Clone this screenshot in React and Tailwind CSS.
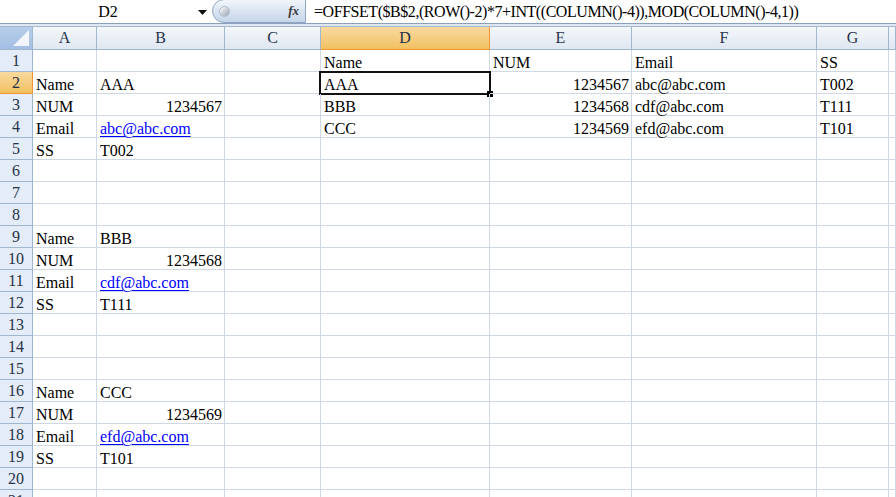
import React from 'react';

const cols = ['A', 'B', 'C', 'D', 'E', 'F', 'G', ''];

// cell content per row: [A, B, C, D, E, F, G]
const rows = {
  1: ['', '', '', 'Name', 'NUM', 'Email', 'SS'],
  2: ['Name', 'AAA', '', 'AAA', '1234567', 'abc@abc.com', 'T002'],
  3: ['NUM', '1234567', '', 'BBB', '1234568', 'cdf@abc.com', 'T111'],
  4: ['Email', 'abc@abc.com', '', 'CCC', '1234569', 'efd@abc.com', 'T101'],
  5: ['SS', 'T002'],
  9: ['Name', 'BBB'],
  10: ['NUM', '1234568'],
  11: ['Email', 'cdf@abc.com'],
  12: ['SS', 'T111'],
  16: ['Name', 'CCC'],
  17: ['NUM', '1234569'],
  18: ['Email', 'efd@abc.com'],
  19: ['SS', 'T101'],
};

const isNum = (v) => /^\d+$/.test(v);

function Cell({ value, row, col }) {
  const link = col === 1 && value.includes('@');
  const selected = row === 2 && col === 3;
  return (
    <div
      className={`relative h-[22px] border-r border-b border-[#d0d7e5] flex items-end leading-[17px] whitespace-nowrap px-[3px] ${
        isNum(value) ? 'justify-end pr-[2px]' : ''
      }`}
    >
      <span className={link ? 'text-[#0000ff] underline underline-offset-2' : 'text-black'}>{value}</span>
      {selected && (
        <>
          <div className="absolute left-[-2px] top-[-1px] right-[-2px] bottom-[-2px] border-[2.5px] border-[#111] pointer-events-none" />
          <div className="absolute right-[-4px] bottom-[-4px] w-[6px] h-[6px] bg-black" />
        </>
      )}
    </div>
  );
}

function RowHeader({ n }) {
  const sel = n === 2;
  return (
    <div
      className={`h-[22px] border-r border-b flex items-center justify-center text-[16px] leading-none ${
        sel
          ? 'bg-gradient-to-b from-[#f9d99f] to-[#f1c15f] border-[#f29536] text-[#1d2f46]'
          : 'bg-[#e4ecf7] border-[#9eb6ce] text-[#27334a]'
      }`}
    >
      {n}
    </div>
  );
}

export default function App() {
  const rowNums = Array.from({ length: 21 }, (_, i) => i + 1);
  return (
    <div
      className="w-[896px] h-[497px] overflow-hidden bg-white text-[16px]"
      style={{ fontFamily: '"Liberation Serif", "Noto Sans CJK TC", serif' }}
    >
      {/* formula bar */}
      <div className="flex h-[24px] border-b border-[#8ba0bc] bg-white">
        <div className="w-[212px] flex items-center relative">
          <span className="flex-1 text-center pl-[4px]">D2</span>
          <svg width="9" height="5" viewBox="0 0 9 5" className="absolute left-[198px] top-[10px]">
            <path d="M0 0h9L4.5 5z" fill="#111" />
          </svg>
        </div>
        <div className="w-[94px] h-[24px] -mt-[1px] rounded-l-full border border-[#8fa6c4] bg-gradient-to-b from-[#f2f6fb] via-[#d9e4f2] to-[#c7d6ea] flex items-center justify-between pl-[6px] pr-[6px]">
          <span className="w-[11px] h-[11px] rounded-full bg-gradient-to-br from-[#ffffff] to-[#9aa5b3] border border-[#b0bccb]" />
          <span className="italic font-bold text-[13px] text-[#3a3a3a]">fx</span>
        </div>
        <div className="flex-1 flex items-center pl-[8px] tracking-[-0.45px] whitespace-nowrap overflow-hidden">
          =OFFSET($B$2,(ROW()-2)*7+INT((COLUMN()-4)),MOD(COLUMN()-4,1))
        </div>
      </div>
      <div className="h-[3px] bg-[#dfe7f1] border-b border-[#a5b7cf]" />

      {/* sheet grid */}
      <div className="grid grid-cols-[33px_64px_128px_96px_169px_142px_185px_72px_1fr]">
        <div className="h-[23px] border-r border-b border-[#9eb6ce] bg-gradient-to-b from-[#b7cde9] to-[#a3bfe4] relative">
          <svg width="16" height="16" viewBox="0 0 16 16" className="absolute right-[3px] bottom-[3px]">
            <path d="M16 0V16H0z" fill="#ffffff" opacity="0.85" />
          </svg>
        </div>
        {cols.map((c, i) => (
          <div
            key={`h-${i}`}
            className={`h-[23px] border-r border-b flex items-center justify-center leading-none ${
              c === 'D'
                ? 'bg-gradient-to-b from-[#f9d99f] to-[#f1c15f] border-[#f29536] text-[#1d2f46]'
                : 'bg-gradient-to-b from-[#f4f7fb] to-[#dfe7f1] border-[#9eb6ce] text-[#27334a]'
            }`}
          >
            {c}
          </div>
        ))}
        {rowNums.map((n) => {
          const data = rows[n] || [];
          return (
            <React.Fragment key={n}>
              <RowHeader n={n} />
              {cols.map((_, ci) => (
                <Cell key={`${n}-${ci}`} row={n} col={ci} value={data[ci] || ''} />
              ))}
            </React.Fragment>
          );
        })}
      </div>
    </div>
  );
}
